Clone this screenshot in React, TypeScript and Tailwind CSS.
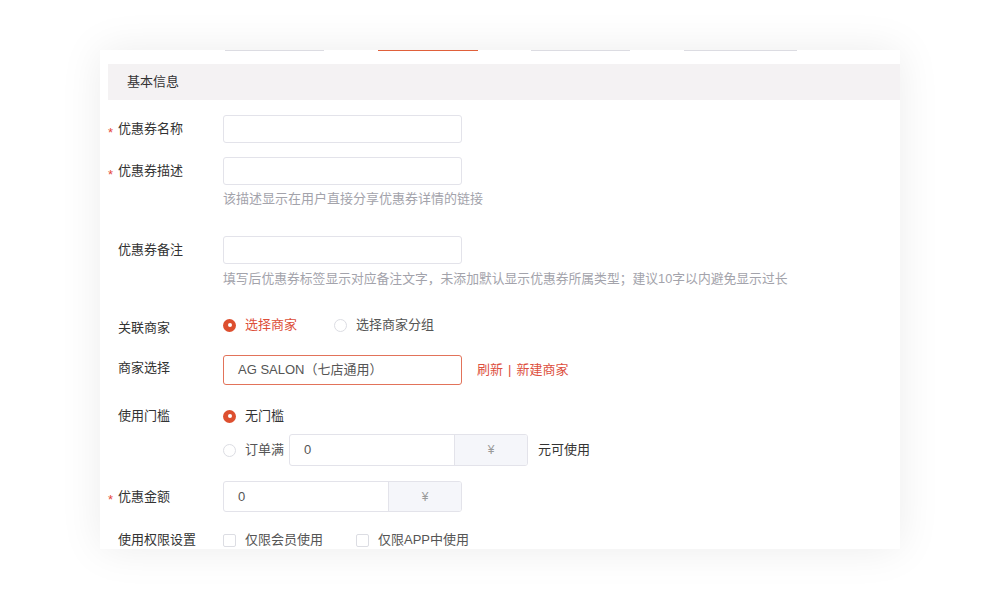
import React from "react";

const FONT = { fontFamily: '"Liberation Sans", "Noto Sans CJK SC", sans-serif' };

function Star() {
  return <span className="w-[10px] pt-[6px] text-[13px] leading-none text-[#e5483a]">*</span>;
}

function Label({ text, required = false, offset = "" }: { text: string; required?: boolean; offset?: string }) {
  return (
    <div className={`flex w-[115px] shrink-0 items-center ${offset}`}>
      {required ? <Star /> : <span className="w-[10px]" />}
      <span className="text-[13px] text-[#333]">{text}</span>
    </div>
  );
}

function Radio({ checked, label, tone = "text-[#555]" }: { checked: boolean; label: string; tone?: string }) {
  return (
    <div className="flex items-center">
      {checked ? (
        <span className="flex h-[13px] w-[13px] items-center justify-center rounded-full bg-[#dd4f2f]">
          <span className="h-[4px] w-[4px] rounded-full bg-white" />
        </span>
      ) : (
        <span className="h-[13px] w-[13px] rounded-full border border-[#dcdde3] bg-white" />
      )}
      <span className={`ml-[9px] text-[13px] ${tone}`}>{label}</span>
    </div>
  );
}

function Checkbox({ label }: { label: string }) {
  return (
    <div className="flex items-center">
      <span className="h-[13px] w-[13px] rounded-[2px] border border-[#dcdde3] bg-white" />
      <span className="ml-[9px] text-[13px] text-[#555]">{label}</span>
    </div>
  );
}

function MoneyInput({ h }: { h: string }) {
  return (
    <div className={`flex w-[239px] ${h} overflow-hidden rounded-[3px] border border-[#e3e3ea]`}>
      <div className="flex w-[165px] items-center border-r border-[#e3e3ea] pl-[14px] text-[13px] text-[#555]">0</div>
      <div className="flex flex-1 items-center justify-center bg-[#f5f6fa] text-[12px] text-[#999]">¥</div>
    </div>
  );
}

export default function App() {
  return (
    <div className="h-[600px] w-[1000px] bg-white pl-[100px] pt-[50px]" style={FONT}>
      <div className="h-[499px] w-[800px] overflow-hidden bg-white shadow-[0_0_40px_rgba(0,0,0,0.08)]">
        <div className="flex h-px">
          <div className="ml-[125px] w-[99px] bg-[#dcdce2]" />
          <div className="ml-[54px] w-[100px] bg-[#e0603a]" />
          <div className="ml-[53px] w-[99px] bg-[#dcdce2]" />
          <div className="ml-[54px] w-[113px] bg-[#dcdce2]" />
        </div>

        <div className="ml-[8px] mt-[13px] flex h-[36px] items-center bg-[#f4f2f3] pl-[19px] text-[13px] text-[#333]">
          基本信息
        </div>

        <div className="pl-[8px]">
          <div className="mt-[15px] flex h-[28px] items-center">
            <Label text="优惠券名称" required />
            <div className="h-[28px] w-[239px] rounded-[3px] border border-[#e3e3ea]" />
          </div>

          <div className="mt-[14px] flex h-[28px] items-center">
            <Label text="优惠券描述" required />
            <div className="h-[28px] w-[239px] rounded-[3px] border border-[#e3e3ea]" />
          </div>
          <div className="mt-[4px] flex h-[20px] items-center pl-[115px] text-[13px] text-[#a3a3ab]">
            该描述显示在用户直接分享优惠券详情的链接
          </div>

          <div className="mt-[27px] flex h-[28px] items-center">
            <Label text="优惠券备注" />
            <div className="h-[28px] w-[239px] rounded-[3px] border border-[#e3e3ea]" />
          </div>
          <div className="mt-[5px] flex h-[20px] items-center pl-[115px] text-[12.8px] text-[#a3a3ab]">
            填写后优惠券标签显示对应备注文字，未添加默认显示优惠券所属类型；建议10字以内避免显示过长
          </div>

          <div className="mt-[26px] flex h-[20px] items-center">
            <Label text="关联商家" offset="pt-[6px]" />
            <Radio checked label="选择商家" tone="text-[#dd4f3a]" />
            <div className="ml-[37px]">
              <Radio checked={false} label="选择商家分组" />
            </div>
          </div>

          <div className="mt-[20px] flex h-[30px] items-center">
            <Label text="商家选择" offset="pb-[5px]" />
            <div className="flex h-[30px] w-[239px] items-center rounded-[3px] border border-[#e2735a] pl-[14px] text-[13px] text-[#555]">
              AG SALON（七店通用）
            </div>
            <div className="ml-[15px] flex items-center text-[13px] text-[#dd5040]">
              <span>刷新</span>
              <span className="mx-[5px] text-[#dd5040]">|</span>
              <span>新建商家</span>
            </div>
          </div>

          <div className="mt-[21px] flex h-[20px] items-center">
            <Label text="使用门槛" />
            <Radio checked label="无门槛" tone="text-[#333]" />
          </div>
          <div className="mt-[8px] flex h-[32px] items-center pl-[115px]">
            <Radio checked={false} label="订单满" />
            <div className="ml-[5px]">
              <MoneyInput h="h-[32px]" />
            </div>
            <span className="ml-[10px] text-[13px] text-[#333]">元可使用</span>
          </div>

          <div className="mt-[15px] flex h-[31px] items-center">
            <Label text="优惠金额" required />
            <MoneyInput h="h-[31px]" />
          </div>

          <div className="mt-[18px] flex h-[20px] items-center">
            <Label text="使用权限设置" />
            <Checkbox label="仅限会员使用" />
            <div className="ml-[33px]">
              <Checkbox label="仅限APP中使用" />
            </div>
          </div>
        </div>
      </div>
    </div>
  );
}
